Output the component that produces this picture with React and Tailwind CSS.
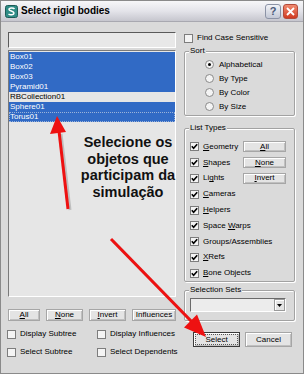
import React from "react";

const items = [
  { name: "Box01", sel: true },
  { name: "Box02", sel: true },
  { name: "Box03", sel: true },
  { name: "Pyramid01", sel: true },
  { name: "RBCollection01", sel: false },
  { name: "Sphere01", sel: true },
  { name: "Torus01", sel: true, focus: true },
];

const types = [
  { label: "Geometry", u: 0, btn: "All" },
  { label: "Shapes", u: 0, btn: "None" },
  { label: "Lights", u: 2, btn: "Invert" },
  { label: "Cameras", u: 0 },
  { label: "Helpers", u: 0 },
  { label: "Space Warps", u: 6 },
  { label: "Groups/Assemblies", u: -1 },
  { label: "XRefs", u: 0 },
  { label: "Bone Objects", u: 0 },
];

function Mn({ text, u }) {
  if (u < 0) return text;
  return (
    <>
      {text.slice(0, u)}
      <span className="underline">{text[u]}</span>
      {text.slice(u + 1)}
    </>
  );
}

function Btn({ children, className = "" }) {
  return (
    <div
      className={`flex items-center justify-center border bg-[#e4e4e4] shadow-[inset_1px_1px_#fff,inset_-1px_-1px_#c0c0c0] text-[8px] leading-none text-black ${className}`}
    >
      {children}
    </div>
  );
}

function Check({ checked }) {
  return (
    <div className="w-[9px] h-[9px] shrink-0 border border-[#7d7d7d] bg-[#f4f4f4] flex items-center justify-center">
      {checked && (
        <svg width="7" height="7" viewBox="0 0 7 7">
          <path d="M0.8 3.2 L2.6 5.2 L6.2 1.2" stroke="#000" strokeWidth="1.6" fill="none" />
        </svg>
      )}
    </div>
  );
}

function Radio({ on }) {
  return (
    <div className="w-[9px] h-[9px] shrink-0 rounded-full border border-[#8a8a8a] bg-[#f4f4f4] flex items-center justify-center">
      {on && <div className="w-[3px] h-[3px] rounded-full bg-black" />}
    </div>
  );
}

function Group({ label, className = "", children }) {
  return (
    <div
      className={`relative border border-[#a2a2a2] rounded-[2px] shadow-[inset_1px_1px_#fff,1px_1px_#fff] ${className}`}
    >
      <span className="absolute -top-[6px] left-[4px] bg-[#dadada] px-[1px] text-[8px] leading-[10px] text-black">
        {label}
      </span>
      {children}
    </div>
  );
}

export default function App() {
  return (
    <div className="relative w-[304px] h-[374px] overflow-hidden bg-[#dadada] border border-[#8a8a8a] font-['Liberation_Sans',Arial,sans-serif] text-black select-none">
      {/* Title bar */}
      <div className="h-[21px] flex items-center pl-[4px] pr-[5px] bg-gradient-to-b from-[#f7f7f9] via-[#e4e4ea] to-[#c6c6ce] border-b border-[#a8a8b0]">
        <svg width="13" height="13" viewBox="0 0 13 13" className="shrink-0">
          <rect x="0.5" y="0.5" width="12" height="12" rx="2" fill="#2f8c86" stroke="#1d5c58" />
          <path d="M9.5 4 C8.5 2.5 4 2.5 4 4.5 C4 6.3 9 5.8 9 8 C9 10 5 10.3 3.5 9" stroke="#fff" strokeWidth="1.5" fill="none" />
        </svg>
        <span className="ml-[3px] text-[10px] font-bold leading-none text-black">Select rigid bodies</span>
        <div className="ml-auto flex gap-[2px]">
          <div className="w-[16px] h-[15px] rounded-[3px] border border-[#8c93a6] bg-gradient-to-b from-[#f2f3f7] to-[#c3c8d6] flex items-center justify-center text-[11px] leading-none font-bold text-[#4a5a7a]">
            ?
          </div>
          <div className="w-[15px] h-[15px] rounded-[3px] border border-[#b34a3a] bg-gradient-to-b from-[#f08a70] to-[#d0381e] flex items-center justify-center">
            <svg width="9" height="9" viewBox="0 0 9 9">
              <path d="M1 1 L8 8 M8 1 L1 8" stroke="#fff" strokeWidth="1.8" />
            </svg>
          </div>
        </div>
      </div>

      {/* Body */}
      <div className="flex pl-[7px]">
        {/* Left column */}
        <div className="w-[168px] flex flex-col pt-[10px]">
          <div className="h-[16px] border border-t-[#5a5a5a] border-l-[#5a5a5a] border-b-white border-r-white bg-[#e8e8e8]" />
          <div className="mt-[2px] h-[247px] border border-t-[#7a7a7a] border-l-[#7a7a7a] border-b-white border-r-white bg-[#e6e6e6] pt-[1px]">
            {items.map((it) => (
              <div
                key={it.name}
                className={`h-[10px] pl-[1px] text-[8px] leading-[10px] ${
                  it.sel ? "bg-[#316ac5] text-white" : "text-black"
                } ${it.focus ? "outline outline-1 outline-dotted outline-[#9bb3da] -outline-offset-1" : ""}`}
              >
                {it.name}
              </div>
            ))}
          </div>
          <div className="mt-[12px] flex justify-between">
            <Btn className="w-[32px] h-[12px] border-[#a6a6a6]"><Mn text="All" u={0} /></Btn>
            <Btn className="w-[37px] h-[12px] border-[#a6a6a6]"><Mn text="None" u={0} /></Btn>
            <Btn className="w-[37px] h-[12px] border-[#a6a6a6]"><Mn text="Invert" u={0} /></Btn>
            <Btn className="w-[44px] h-[12px] border-[#a6a6a6]">Influences</Btn>
          </div>
          <div className="mt-[8px] -ml-[1px] grid grid-cols-[90px_1fr] gap-y-[8px] text-[8px] leading-[10px] whitespace-nowrap">
            <div className="flex items-center gap-[4px]"><Check /><span>Display Subtree</span></div>
            <div className="flex items-center gap-[4px]"><Check /><span>Display Influences</span></div>
            <div className="flex items-center gap-[4px]"><Check /><span>Select Subtree</span></div>
            <div className="flex items-center gap-[4px]"><Check /><span>Select Dependents</span></div>
          </div>
        </div>

        {/* Right column */}
        <div className="ml-[8px] w-[111px] flex flex-col pt-[11px] text-[8px] leading-[10px]">
          <div className="flex items-center gap-[4px] h-[10px]">
            <Check />
            <span>Find Case Sensitive</span>
          </div>

          <Group label="Sort" className="mt-[8px] h-[65px] pt-[8px] pl-[20px] flex flex-col gap-[5px]">
            {["Alphabetical", "By Type", "By Color", "By Size"].map((s, i) => (
              <div key={s} className="flex items-center gap-[5px] h-[9px]">
                <Radio on={i === 0} />
                <span>{s}</span>
              </div>
            ))}
          </Group>

          <Group label="List Types" className="mt-[12px] h-[154px] pt-[10px] pl-[5px] pr-[8px] flex flex-col">
            {types.map((t) => (
              <div key={t.label} className="h-[16px] flex items-center">
                <Check checked />
                <span className="ml-[4px]"><Mn text={t.label} u={t.u} /></span>
                {t.btn && (
                  <Btn className="ml-auto w-[43px] h-[11px] border-[#a6a6a6]"><Mn text={t.btn} u={0} /></Btn>
                )}
              </div>
            ))}
          </Group>

          <Group label="Selection Sets" className="mt-[8px] h-[31px] pt-[7px] pl-[5px] pr-[8px]">
            <div className="h-[14px] flex border border-t-[#6a6a6a] border-l-[#6a6a6a] border-b-white border-r-white bg-[#ececec]">
              <div className="ml-auto w-[11px] h-full border border-[#9a9a9a] bg-[#e4e4e4] shadow-[inset_1px_1px_#fff] flex items-center justify-center">
                <svg width="5" height="3" viewBox="0 0 5 3"><path d="M0 0 H5 L2.5 3 Z" fill="#000" /></svg>
              </div>
            </div>
          </Group>

          <div className="mt-[11px] ml-[9px] flex gap-[5px]">
            <Btn className="w-[47px] h-[15px] border-[#3a3a3a] outline outline-1 outline-dotted outline-[#555] -outline-offset-3">Select</Btn>
            <Btn className="w-[47px] h-[15px] border-[#a6a6a6]">Cancel</Btn>
          </div>
        </div>
      </div>

      {/* Annotation */}
      <div className="absolute left-[72px] top-[133px] w-[110px] text-center text-[14.5px] leading-[16.5px] font-bold text-[#111]">
        Selecione os<br />objetos que<br />participam da<br />simulação
      </div>
      <svg className="absolute left-0 top-0 pointer-events-none" width="304" height="374" viewBox="0 0 304 374">
        <g opacity="0.35" stroke="#777" fill="#777">
          <line x1="69" y1="209" x2="60" y2="133" strokeWidth="3" />
          <line x1="112" y1="240" x2="193" y2="323" strokeWidth="3" />
        </g>
        <g stroke="#ee1111" fill="#ee1111">
          <line x1="67" y1="208" x2="58" y2="130" strokeWidth="3" />
          <polygon points="56,115 49,133 65,131" stroke="none" />
          <line x1="110" y1="238" x2="192" y2="322" strokeWidth="3" />
          <polygon points="205,336 183,326.5 196,313.5" stroke="none" />
        </g>
      </svg>
    </div>
  );
}
